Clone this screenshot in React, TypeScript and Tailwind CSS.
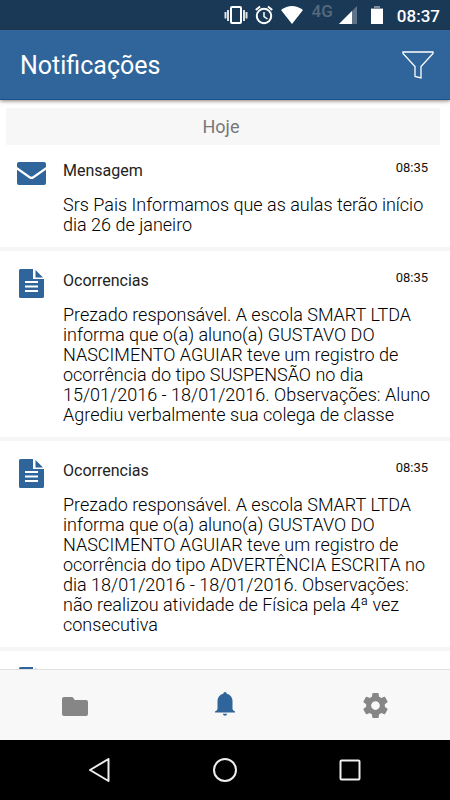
import React, { useState } from 'react';

type Notification = {
  id: number;
  kind: 'message' | 'report';
  title: string;
  time: string;
  text: string;
};

const NOTIFICATIONS: Notification[] = [
  {
    id: 1,
    kind: 'message',
    title: 'Mensagem',
    time: '08:35',
    text: 'Srs Pais Informamos que as aulas terão início dia 26 de janeiro',
  },
  {
    id: 2,
    kind: 'report',
    title: 'Ocorrencias',
    time: '08:35',
    text: 'Prezado responsável. A escola SMART LTDA informa que o(a) aluno(a) GUSTAVO DO NASCIMENTO AGUIAR teve um registro de ocorrência do tipo SUSPENSÃO no dia 15/01/2016 - 18/01/2016. Observações: Aluno Agrediu verbalmente sua colega de classe',
  },
  {
    id: 3,
    kind: 'report',
    title: 'Ocorrencias',
    time: '08:35',
    text: 'Prezado responsável. A escola SMART LTDA informa que o(a) aluno(a) GUSTAVO DO NASCIMENTO AGUIAR teve um registro de ocorrência do tipo ADVERTÊNCIA ESCRITA no dia 18/01/2016 - 18/01/2016. Observações: não realizou atividade de Física pela 4ª vez consecutiva',
  },
];

function MailIcon() {
  return (
    <svg viewBox="0 0 29 23" className="h-[23px] w-[29px]" fill="#2f659b" aria-hidden="true">
      <path d="M0 5V2Q0 0 2 0h25q2 0 2 2v3L15.800 14.300q-1.300.8-2.600 0z" />
      <path d="M0 7.800l12.400 8.600q2.100 1.300 4.200 0L29 7.800V21q0 2-2 2H2q-2 0-2-2z" />
    </svg>
  );
}

function ReportIcon() {
  return (
    <svg viewBox="0 0 25 29" className="h-[29px] w-[25px]" aria-hidden="true">
      <path d="M1.500 0H14v10h11v17.500q0 1.500-1.500 1.500h-22Q0 29 0 27.500v-26Q0 0 1.500 0z" fill="#2f659b" />
      <path d="M16.500 1v7.500H24z" fill="#2f659b" />
      <path d="M6 13h13M6 17.500h13M6 22h13" stroke="#fff" strokeWidth="2" />
    </svg>
  );
}

// --- Android status bar ---
function StatusBar() {
  return (
    <div className="flex h-[30px] shrink-0 items-center justify-end bg-[#1a3957] pr-[10px] text-white">
      <svg viewBox="0 0 24 18" className="mr-[7px] h-[18px] w-[24px]" fill="none" stroke="#fff" aria-hidden="true">
        <rect x="7" y="1" width="10" height="16" rx="1" strokeWidth="2" />
        <path d="M4 4v11M20 4v11" strokeWidth="2" opacity=".85" />
        <path d="M1.500 6v6.500M22.500 6v6.500" strokeWidth="2" opacity=".85" />
      </svg>
      <svg viewBox="0 0 18 20" className="mr-[8px] h-[20px] w-[18px]" fill="none" stroke="#fff" aria-hidden="true">
        <circle cx="9" cy="11" r="7.200" strokeWidth="2" />
        <path d="M9 7v4.500l3.500 2.500" strokeWidth="1.500" />
        <path d="M.8 5L5 1.500M17.200 5L13 1.500" strokeWidth="2" />
      </svg>
      <svg viewBox="0 0 22 18" className="mr-[9px] h-[18px] w-[22px]" fill="#fff" aria-hidden="true">
        <path d="M0 4Q11-4 22 4L11 18z" />
      </svg>
      <span className="mr-[6px] mb-[9px] text-[17px] leading-4 font-medium text-[#56697e]">4G</span>
      <svg viewBox="0 0 18 18" className="mr-[14px] h-[18px] w-[18px]" aria-hidden="true">
        <path d="M18 0v18H0z" fill="#5f7388" />
        <path d="M13 5v13H0z" fill="#fff" />
      </svg>
      <svg viewBox="0 0 12 18" className="mr-[14px] h-[18px] w-[12px]" aria-hidden="true">
        <path d="M3 0h6v2h3v3H0V2h3z" fill="#7d8c9c" />
        <path d="M0 3h12v15H0z" fill="#fff" />
      </svg>
      <span className="pt-[2px] text-[17px] leading-5 font-medium">08:37</span>
    </div>
  );
}

function NotificationItem({ item }: { item: Notification }) {
  return (
    <li className="flex border-b-4 border-[#f6f6f6] pt-4 pb-3 first:pt-3">
      <div className="flex h-8 w-[63px] shrink-0 items-center justify-center">
        {item.kind === 'message' ? <MailIcon /> : <ReportIcon />}
      </div>
      <div className="min-w-0 flex-1 pr-4">
        <div className="flex items-start justify-between pr-[6px]">
          <h2 className="text-base leading-7 text-[#222]">{item.title}</h2>
          <time className="text-[13px] leading-[22px] text-[#111]">{item.time}</time>
        </div>
        <p className="pt-[10px] text-lg leading-5 font-light text-black">{item.text}</p>
      </div>
    </li>
  );
}

export default function App() {
  const [tab, setTab] = useState('avisos');

  return (
    <div className="flex h-screen flex-col overflow-hidden bg-white font-[Roboto,sans-serif]">
      <StatusBar />

      <header className="z-10 flex h-[70px] shrink-0 items-center justify-between border-b border-[#15538f] bg-[#2f659b] pr-[16px] pl-5 shadow-[0_1px_4px_rgba(60,40,20,0.6)]">
        <h1 className="pt-[2px] text-[25px] leading-8 text-white">Notificações</h1>
        <button aria-label="Filtrar" className="cursor-pointer">
          <svg viewBox="0 0 32 28" className="h-7 w-8" fill="none" stroke="#fff" strokeWidth="1.300">
            <path d="M1 1h30v1.500L19 15.500V27l-6-1.500v-10L1 2.500z" />
          </svg>
        </button>
      </header>

      {/* Lista */}
      <main className="min-h-0 flex-1 overflow-hidden">
        <div className="mt-2 mr-[10px] ml-[6px] bg-[#f7f7f7] py-2 pr-1 text-center text-lg leading-[21px] text-[#777]">
          Hoje
        </div>
        <ul>
          {NOTIFICATIONS.map((item) => (
            <NotificationItem key={item.id} item={item} />
          ))}
          {/* próximo aviso, cortado pela barra de abas */}
          <li className="flex pt-4">
            <div className="flex w-[63px] justify-center">
              <ReportIcon />
            </div>
          </li>
        </ul>
      </main>

      {/* Abas */}
      <nav className="grid h-[71px] shrink-0 grid-cols-3 border-t border-[#e0e0e0] bg-[#f8f8f8]">
        <button
          aria-label="Arquivos"
          onClick={() => setTab('arquivos')}
          className={`flex items-center justify-center pt-[2px] ${tab === 'arquivos' ? 'text-[#2f659b]' : 'text-[#868686]'}`}
        >
          <svg viewBox="0 0 26 19" className="h-[19px] w-[26px]" fill="currentColor">
            <path d="M2 0h8q.8 0 1.200.8l1.200 1.700q.3.500 1 .500H24q2 0 2 2v12q0 2-2 2H2q-2 0-2-2V2Q0 0 2 0z" />
          </svg>
        </button>
        <button
          aria-label="Notificações"
          onClick={() => setTab('avisos')}
          className={`flex items-center justify-center pb-[2px] ${tab === 'avisos' ? 'text-[#2f659b]' : 'text-[#868686]'}`}
        >
          <svg viewBox="0 0 20 24" className="h-6 w-5" fill="currentColor">
            <path d="M10 0q1.600 0 1.800 1.700Q17.500 3.200 17.500 9.500v7.500q0 1.200 2.500 2.500v1H0v-1Q2.500 18.200 2.500 17V9.500Q2.500 3.200 8.200 1.700 8.400 0 10 0z" />
            <path d="M7.800 21.800h4.400q-.4 2-2.200 2t-2.200-2z" />
          </svg>
        </button>
        <button
          aria-label="Configurações"
          onClick={() => setTab('config')}
          className={`flex items-center justify-center ${tab === 'config' ? 'text-[#2f659b]' : 'text-[#868686]'}`}
        >
          <svg viewBox="2 2 20 20" className="h-[25px] w-[25px]" fill="currentColor">
            <path d="M19.430 12.980c.04-.32.07-.64.07-.98s-.03-.66-.07-.98l2.110-1.650c.19-.15.24-.42.12-.64l-2-3.460c-.12-.22-.39-.3-.61-.22l-2.490 1c-.52-.4-1.080-.73-1.690-.98l-.38-2.650C14.460 2.180 14.250 2 14 2h-4c-.25 0-.46.18-.49.42l-.38 2.650c-.61.25-1.170.59-1.690.98l-2.490-1c-.23-.09-.49 0-.61.22l-2 3.460c-.13.22-.07.49.12.64l2.110 1.650c-.04.32-.07.65-.07.98s.03.66.07.98l-2.110 1.650c-.19.15-.24.42-.12.64l2 3.460c.12.22.39.3.61.22l2.490-1c.52.4 1.080.73 1.690.98l.38 2.650c.03.24.24.42.49.42h4c.25 0 .46-.18.49-.42l.38-2.650c.61-.25 1.170-.59 1.690-.98l2.490 1c.23.09.49 0 .61-.22l2-3.460c.12-.22.07-.49-.12-.64l-2.110-1.650zM12 15.500c-1.930 0-3.500-1.570-3.500-3.500s1.570-3.500 3.500-3.500 3.500 1.570 3.500 3.500-1.570 3.500-3.500 3.500z" />
          </svg>
        </button>
      </nav>

      {/* Android navigation keys */}
      <div className="flex h-[60px] shrink-0 items-center justify-center gap-[101px] bg-black">
        <button aria-label="Voltar">
          <svg viewBox="0 0 24 24" className="size-6" fill="none" stroke="#eee" strokeWidth="2" strokeLinejoin="round">
            <path d="M20.500 1v22L2 12z" />
          </svg>
        </button>
        <button aria-label="Início">
          <svg viewBox="0 0 24 24" className="size-6" fill="none" stroke="#eee" strokeWidth="2">
            <circle cx="12" cy="12" r="11" />
          </svg>
        </button>
        <button aria-label="Recentes">
          <svg viewBox="0 0 24 24" className="size-6" fill="none" stroke="#eee" strokeWidth="2">
            <rect x="2.500" y="2.500" width="19" height="19" rx="1" />
          </svg>
        </button>
      </div>
    </div>
  );
}
